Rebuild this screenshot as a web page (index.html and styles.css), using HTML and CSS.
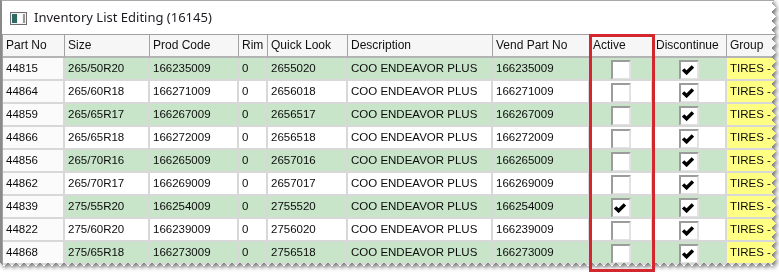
FILE: index.html
```html
<!DOCTYPE html>
<html lang="en">
<head>
    <meta charset="UTF-8">
    <title>Inventory List Editing</title>
    <link rel="stylesheet" href="styles.css">
</head>
<body>
    <div class="shot">
        <div class="paper">
            <div class="torn-bottom">
                <div class="window">
                    <!-- заголовок окна -->
                    <div class="titlebar">
                        <svg class="app-icon" width="17" height="13" viewBox="0 0 17 13">
                            <rect x="0.5" y="0.5" width="16" height="12" fill="#f2f2f2" stroke="#6f6f6f"/>
                            <rect x="2" y="2" width="5" height="9" fill="#2f6b66"/>
                            <rect x="8" y="2" width="4" height="9" fill="#ffffff"/>
                            <rect x="13" y="2" width="2" height="9" fill="#9a9a9a"/>
                        </svg>
                        <span class="title-text">Inventory List Editing (16145)</span>
                    </div>

                    <!-- таблица -->
                    <div class="grid">
                        <div class="hcell">Part No</div>
                        <div class="hcell">Size</div>
                        <div class="hcell">Prod Code</div>
                        <div class="hcell">Rim</div>
                        <div class="hcell">Quick Look</div>
                        <div class="hcell">Description</div>
                        <div class="hcell">Vend Part No</div>
                        <div class="hcell">Active</div>
                        <div class="hcell">Discontinue</div>
                        <div class="hcell">Group</div>

                        <div class="cell key">44815</div>
                        <div class="cell green">265/50R20</div>
                        <div class="cell green">166235009</div>
                        <div class="cell green">0</div>
                        <div class="cell green">2655020</div>
                        <div class="cell green">COO ENDEAVOR PLUS</div>
                        <div class="cell green">166235009</div>
                        <div class="cell green center"><span class="check"></span></div>
                        <div class="cell green center"><span class="check on"><svg viewBox="0 0 11 9"><path d="M1 4 L4.2 7 L10 1.2"/></svg></span></div>
                        <div class="cell group">TIRES -</div>

                        <div class="cell key">44864</div>
                        <div class="cell">265/60R18</div>
                        <div class="cell">166271009</div>
                        <div class="cell">0</div>
                        <div class="cell">2656018</div>
                        <div class="cell">COO ENDEAVOR PLUS</div>
                        <div class="cell">166271009</div>
                        <div class="cell center"><span class="check"></span></div>
                        <div class="cell center"><span class="check on"><svg viewBox="0 0 11 9"><path d="M1 4 L4.2 7 L10 1.2"/></svg></span></div>
                        <div class="cell group">TIRES -</div>

                        <div class="cell key">44859</div>
                        <div class="cell green">265/65R17</div>
                        <div class="cell green">166267009</div>
                        <div class="cell green">0</div>
                        <div class="cell green">2656517</div>
                        <div class="cell green">COO ENDEAVOR PLUS</div>
                        <div class="cell green">166267009</div>
                        <div class="cell green center"><span class="check"></span></div>
                        <div class="cell green center"><span class="check on"><svg viewBox="0 0 11 9"><path d="M1 4 L4.2 7 L10 1.2"/></svg></span></div>
                        <div class="cell group">TIRES -</div>

                        <div class="cell key">44866</div>
                        <div class="cell">265/65R18</div>
                        <div class="cell">166272009</div>
                        <div class="cell">0</div>
                        <div class="cell">2656518</div>
                        <div class="cell">COO ENDEAVOR PLUS</div>
                        <div class="cell">166272009</div>
                        <div class="cell center"><span class="check"></span></div>
                        <div class="cell center"><span class="check on"><svg viewBox="0 0 11 9"><path d="M1 4 L4.2 7 L10 1.2"/></svg></span></div>
                        <div class="cell group">TIRES -</div>

                        <div class="cell key">44856</div>
                        <div class="cell green">265/70R16</div>
                        <div class="cell green">166265009</div>
                        <div class="cell green">0</div>
                        <div class="cell green">2657016</div>
                        <div class="cell green">COO ENDEAVOR PLUS</div>
                        <div class="cell green">166265009</div>
                        <div class="cell green center"><span class="check"></span></div>
                        <div class="cell green center"><span class="check on"><svg viewBox="0 0 11 9"><path d="M1 4 L4.2 7 L10 1.2"/></svg></span></div>
                        <div class="cell group">TIRES -</div>

                        <div class="cell key">44862</div>
                        <div class="cell">265/70R17</div>
                        <div class="cell">166269009</div>
                        <div class="cell">0</div>
                        <div class="cell">2657017</div>
                        <div class="cell">COO ENDEAVOR PLUS</div>
                        <div class="cell">166269009</div>
                        <div class="cell center"><span class="check"></span></div>
                        <div class="cell center"><span class="check on"><svg viewBox="0 0 11 9"><path d="M1 4 L4.2 7 L10 1.2"/></svg></span></div>
                        <div class="cell group">TIRES -</div>

                        <div class="cell key">44839</div>
                        <div class="cell green">275/55R20</div>
                        <div class="cell green">166254009</div>
                        <div class="cell green">0</div>
                        <div class="cell green">2755520</div>
                        <div class="cell green">COO ENDEAVOR PLUS</div>
                        <div class="cell green">166254009</div>
                        <div class="cell green center"><span class="check on"><svg viewBox="0 0 11 9"><path d="M1 4 L4.2 7 L10 1.2"/></svg></span></div>
                        <div class="cell green center"><span class="check on"><svg viewBox="0 0 11 9"><path d="M1 4 L4.2 7 L10 1.2"/></svg></span></div>
                        <div class="cell group">TIRES -</div>

                        <div class="cell key">44822</div>
                        <div class="cell">275/60R20</div>
                        <div class="cell">166239009</div>
                        <div class="cell">0</div>
                        <div class="cell">2756020</div>
                        <div class="cell">COO ENDEAVOR PLUS</div>
                        <div class="cell">166239009</div>
                        <div class="cell center"><span class="check"></span></div>
                        <div class="cell center"><span class="check on"><svg viewBox="0 0 11 9"><path d="M1 4 L4.2 7 L10 1.2"/></svg></span></div>
                        <div class="cell group">TIRES -</div>

                        <div class="cell key">44868</div>
                        <div class="cell green">275/65R18</div>
                        <div class="cell green">166273009</div>
                        <div class="cell green">0</div>
                        <div class="cell green">2756518</div>
                        <div class="cell green">COO ENDEAVOR PLUS</div>
                        <div class="cell green">166273009</div>
                        <div class="cell green center"><span class="check"></span></div>
                        <div class="cell green center"><span class="check on"><svg viewBox="0 0 11 9"><path d="M1 4 L4.2 7 L10 1.2"/></svg></span></div>
                        <div class="cell group">TIRES -</div>
                    </div>
                </div>
            </div>
        </div>

        <!-- красная рамка вокруг колонки Active -->
        <div class="highlight"></div>
    </div>
</body>
</html>
```

FILE: styles.css
```css
/* стиль страницы */
body {
    margin: 0;
    background: #fff;
    font-family: "Liberation Sans", Arial, sans-serif;
    color: #111;
}

.shot {
    position: relative;
    width: 779px;
    height: 274px;
}

/* тень под "оторванным" листом */
.paper {
    width: 776px;
    height: 267px;
    filter: drop-shadow(2px 2px 2px rgba(0, 0, 0, 0.55));
}

.torn-bottom {
    height: 100%;
    -webkit-mask: conic-gradient(from -45deg at bottom, #0000, #000 1deg 89deg, #0000 90deg) 50% / 8px 100%;
    mask: conic-gradient(from -45deg at bottom, #0000, #000 1deg 89deg, #0000 90deg) 50% / 8px 100%;
}

.window {
    height: 100%;
    box-sizing: border-box;
    background: #fff;
    border-top: 1px solid #a8a8a8;
    border-left: 2px solid #8a8a8a;
    overflow: hidden;
    -webkit-mask: conic-gradient(from 225deg at right, #0000, #000 1deg 89deg, #0000 90deg) 50% / 100% 9px;
    mask: conic-gradient(from 225deg at right, #0000, #000 1deg 89deg, #0000 90deg) 50% / 100% 9px;
}

.titlebar {
    height: 33px;
    display: flex;
    align-items: center;
    padding-left: 8px;
    padding-bottom: 1px;
    box-sizing: border-box;
}

.app-icon {
    margin-right: 7px;
    margin-top: 2px;
}

.title-text {
    font-family: "Noto Sans", sans-serif;
    font-size: 13px;
    color: #1e1a22;
}

/* сетка таблицы */
.grid {
    display: grid;
    grid-template-columns: 62px 85px 89px 29px 80px 145px 97px 63px 74px 60px;
    grid-auto-rows: 23px;
    border-top: 1px solid #a0a0a0;
    border-left: 1px solid #a0a0a0;
}

.hcell {
    box-sizing: border-box;
    background: #f6f6f6;
    border-right: 1px solid #a3a3a3;
    border-bottom: 2px solid #b4b4b4;
    font-size: 12px;
    line-height: 21px;
    padding-left: 3px;
    white-space: nowrap;
    overflow: hidden;
}

.cell {
    box-sizing: border-box;
    background: #fff;
    border-right: 2px solid #d8d8d8;
    border-bottom: 2px solid #d8d8d8;
    font-size: 11.5px;
    line-height: 21px;
    padding-left: 3px;
    white-space: nowrap;
    overflow: hidden;
    color: #0c0c0c;
}

.cell.key {
    background: #fbfbfb;
}

.cell.green {
    background: #c8e4c9;
}

.cell.group {
    background: #ffff84;
    border-right: none;
}

.cell.center {
    display: flex;
    justify-content: center;
    align-items: center;
    padding-left: 0;
}

/* флажки */
.check {
    width: 20px;
    height: 20px;
    box-sizing: border-box;
    background: #fff;
    border: 2px solid;
    border-color: #9c9c9c #e2e2e2 #e2e2e2 #9c9c9c;
    position: relative;
    top: 1px;
}

.check svg {
    position: absolute;
    left: 1px;
    top: 3px;
    width: 12px;
    height: 10px;
}

.check svg path {
    fill: none;
    stroke: #000;
    stroke-width: 3.2;
}

.highlight {
    position: absolute;
    left: 589px;
    top: 34px;
    width: 66px;
    height: 238px;
    box-sizing: border-box;
    border: 3px solid #d2272d;
}
```
